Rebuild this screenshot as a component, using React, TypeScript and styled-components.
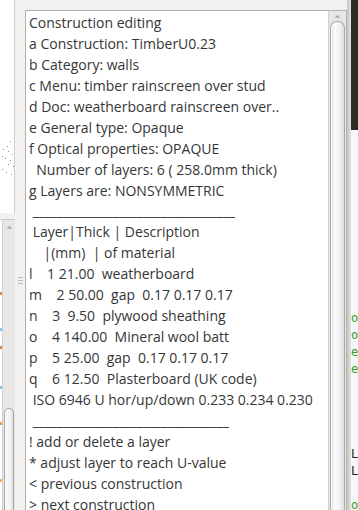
import React from 'react';
import styled, { createGlobalStyle } from 'styled-components';

const Global = createGlobalStyle`
  html, body { margin: 0; padding: 0; background: #f2f1f0; overflow: hidden; }
  #root { width: 358px; height: 510px; }
`;

const Window = styled.div`
  display: flex;
  width: 358px;
  height: 510px;
  overflow: hidden;
  background: #f2f1f0;
`;

const LeftColumn = styled.div`
  width: 15px;
  flex: none;
  display: flex;
  flex-direction: column;
`;

const PlotPane = styled.div`
  height: 213px;
  flex: none;
  background: #fff;
  border-right: 1px solid #cfcfcf;
  box-sizing: border-box;
  padding-top: 134px;
`;

const PaneGap = styled.div`
  height: 6px;
  flex: none;
`;

const ListPane = styled.div`
  flex: 1;
  display: flex;
  background: #fff;
  border-top: 1px solid #c9c9c9;
  overflow: hidden;
`;

const ListEdge = styled.div`
  width: 2px;
  flex: none;
  padding-top: 50px;
`;

const Handle = styled.div`
  width: 10px;
  flex: none;
  display: flex;
  justify-content: center;
  padding-top: 277px;
  box-sizing: border-box;
`;

const Grip = styled.div`
  width: 5px;
  height: 8px;
  background: repeating-linear-gradient(to bottom, #b9b9b9 0 1px, transparent 1px 3px);
`;

const MainColumn = styled.div`
  width: 322px;
  flex: none;
  padding-top: 10px;
  display: flex;
  flex-direction: column;
`;

const Frame = styled.div`
  flex: 1;
  display: flex;
  border: 1px solid #b2b2b2;
  border-bottom: none;
  background: #fff;
  min-height: 0;
`;

const TextArea = styled.div`
  flex: 1;
  padding: 2px 0 0 3px;
  font-family: 'Open Sans', 'Noto Sans', sans-serif;
  font-size: 14px;
  color: #363636;
  overflow: hidden;
`;

const Line = styled.div`
  white-space: pre;
  line-height: 20.95px;
  height: 20.95px;
`;

const ScrollBar = styled.div<{ $w: number }>`
  width: ${p => p.$w}px;
  flex: none;
  display: flex;
  flex-direction: column;
  background: #e8e7e6;
  border-left: 1px solid #d2d1d0;
  box-sizing: border-box;
`;

const Stepper = styled.div<{ $h: number }>`
  height: ${p => p.$h}px;
  flex: none;
  display: flex;
  align-items: center;
  justify-content: center;
`;

const Trough = styled.div<{ $top: number }>`
  flex: 1;
  display: flex;
  flex-direction: column;
  padding: ${p => p.$top}px 1px 0 1px;
`;

const Thumb = styled.div`
  flex: 1;
  border: 1px solid #a8a8a8;
  border-bottom: none;
  border-radius: 7px 7px 0 0;
  background: linear-gradient(to right, #d9d9d9 0, #fbfbfb 25%, #f1f1f1 70%, #dcdcdc 100%);
  box-shadow: inset 1px 0 0 #fff;
`;

const RightStrip = styled.div`
  width: 11px;
  flex: none;
  display: flex;
`;

const StripEdge = styled.div`
  width: 4px;
  flex: none;
  background: linear-gradient(to right, #c4c3c2, #e4e3e2);
`;

const Terminal = styled.div`
  flex: 1;
  display: flex;
  flex-direction: column;
  background: #f7f7f6;
  overflow: hidden;
`;

const TerminalTop = styled.div`
  height: 130px;
  flex: none;
  background: #2c2b28;
`;

const TerminalText = styled.div`
  padding-top: 180px;
  font-family: 'DejaVu Sans Mono', monospace;
  font-size: 12px;
`;

const TermLine = styled.div<{ $c: string }>`
  height: 17px;
  line-height: 17px;
  color: ${p => p.$c};
  white-space: pre;
`;

const UpArrow = ({ size }: { size: number }) => (
  <svg width={size} height={size * 0.6} viewBox="0 0 10 6">
    <path d="M1 5.5 L5 1 L9 5.5 Z" fill="#a9a9a9" />
  </svg>
);

const lines = [
  'Construction editing',
  'a Construction: TimberU0.23',
  'b Category: walls',
  'c Menu: timber rainscreen over stud',
  'd Doc: weatherboard rainscreen over..',
  'e General type: Opaque',
  'f Optical properties: OPAQUE',
  '  Number of layers: 6 ( 258.0mm thick)',
  'g Layers are: NONSYMMETRIC',
  ' _________________________________',
  ' Layer|Thick | Description',
  '    |(mm)  | of material',
  'l    1 21.00  weatherboard',
  'm    2 50.00  gap  0.17 0.17 0.17',
  'n    3  9.50  plywood sheathing',
  'o    4 140.00  Mineral wool batt',
  'p    5 25.00  gap  0.17 0.17 0.17',
  'q    6 12.50  Plasterboard (UK code)',
  ' ISO 6946 U hor/up/down 0.233 0.234 0.230',
  ' ________________________________',
  '! add or delete a layer',
  '* adjust layer to reach U-value',
  '< previous construction',
  '> next construction',
];

const termLines: [string, string][] = [
  ['o', '#3a9a2a'], ['o', '#3a9a2a'], ['e', '#3a9a2a'], ['e', '#3a9a2a'],
  ['', '#000'], ['', '#000'], ['', '#000'], ['', '#000'],
  ['L', '#222'], ['L', '#222'], ['', '#000'], ['o', '#3a9a2a'],
];

const dots: [number, number][] = [
  [10, 7], [7, 12], [3, 15], [8, 17], [12, 20], [2, 22], [5, 24], [10, 26],
  [8, 30], [13, 32], [2, 35], [6, 38], [11, 40],
];

const edgeMarks: [number, string][] = [
  [22, '#e8873a'], [58, '#8fc3e6'], [76, '#e07a4a'], [116, '#8fc3e6'],
  [152, '#e8a050'], [209, '#f0b060'],
];

export default function App() {
  return (
    <>
      <Global />
      <Window>
        <LeftColumn>
          <PlotPane>
            <svg width="14" height="50" viewBox="0 0 14 50">
              {dots.map(([x, y], i) => (
                <rect key={i} x={x} y={y} width="1" height="1" fill="#8a8a8a" />
              ))}
            </svg>
          </PlotPane>
          <PaneGap />
          <ListPane>
            <ListEdge>
              <svg width="2" height="240" viewBox="0 0 2 240">
                {edgeMarks.map(([y, c], i) => (
                  <rect key={i} x="0" y={y} width="2" height="3" fill={c} />
                ))}
              </svg>
            </ListEdge>
            <ScrollBar $w={13}>
              <Stepper $h={14}>
                <UpArrow size={7} />
              </Stepper>
              <Trough $top={174}>
                <Thumb />
              </Trough>
            </ScrollBar>
          </ListPane>
        </LeftColumn>
        <Handle>
          <Grip />
        </Handle>
        <MainColumn>
          <Frame>
            <TextArea>
              {lines.map((l, i) => (
                <Line key={i}>{l}</Line>
              ))}
            </TextArea>
            <ScrollBar $w={18}>
              <Stepper $h={10}>
                <UpArrow size={7} />
              </Stepper>
              <Trough $top={0}>
                <Thumb />
              </Trough>
            </ScrollBar>
          </Frame>
        </MainColumn>
        <RightStrip>
          <StripEdge />
          <Terminal>
            <TerminalTop />
            <TerminalText>
              {termLines.map(([t, c], i) => (
                <TermLine key={i} $c={c}>{t}</TermLine>
              ))}
            </TerminalText>
          </Terminal>
        </RightStrip>
      </Window>
    </>
  );
}
